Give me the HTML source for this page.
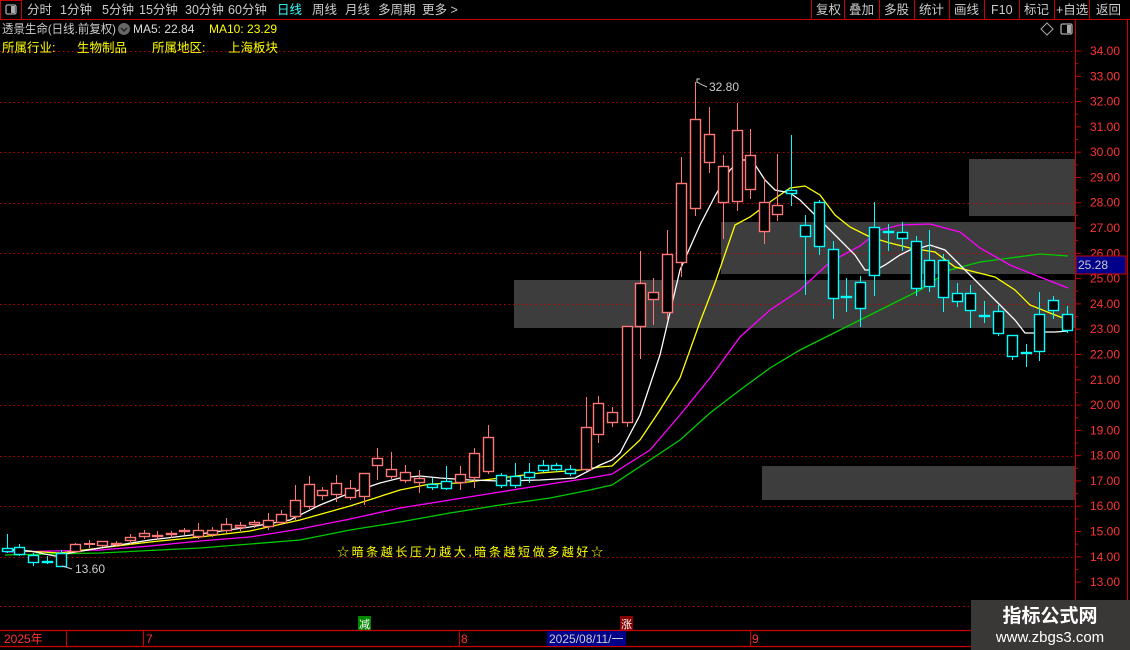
<!DOCTYPE html>
<html><head><meta charset="utf-8">
<style>
body{margin:0;background:#000;width:1130px;height:650px;overflow:hidden;font-family:"Liberation Sans","Noto Sans CJK SC",sans-serif;}
svg{position:absolute;left:0;top:0}
text{font-family:"Liberation Sans","Noto Sans CJK SC",sans-serif;}
</style></head><body>
<svg id="s" width="1130" height="650" viewBox="0 0 1130 650" xmlns="http://www.w3.org/2000/svg">
<rect width="1130" height="650" fill="#000"/>
<g id="bg"></g>
<g id="grid"></g>
<g id="ma" fill="none" stroke-width="1.3"></g>
<g id="k"></g>
<g id="ax"></g>
<rect x="0.5" y="0.5" width="21" height="19" fill="none" stroke="#c00" />
<rect x="6" y="5" width="10" height="9" rx="1.5" fill="none" stroke="#aaa" stroke-width="1.3"/>
<rect x="11" y="6" width="4" height="7" fill="#aaa"/>
<line x1="0" y1="19.5" x2="1130" y2="19.5" stroke="#c00"/>
<g font-size="12.5" fill="#ccc">
<text x="27" y="14">分时</text><text x="60" y="14">1分钟</text><text x="102" y="14">5分钟</text><text x="139" y="14">15分钟</text><text x="185" y="14">30分钟</text><text x="228" y="14">60分钟</text>
<text x="277" y="14" fill="#3ff">日线</text><text x="312" y="14">周线</text><text x="345" y="14">月线</text><text x="378" y="14">多周期</text><text x="422" y="14">更多 &gt;</text>
<text x="816" y="14">复权</text><text x="849" y="14">叠加</text><text x="884" y="14">多股</text><text x="919" y="14">统计</text><text x="954" y="14">画线</text><text x="991" y="14">F10</text><text x="1024" y="14">标记</text><text x="1056" y="14">+自选</text><text x="1096" y="14">返回</text>
</g>
<g stroke="#c00"><line x1="811.5" y1="0" x2="811.5" y2="19"/><line x1="844.5" y1="0" x2="844.5" y2="19"/><line x1="879.5" y1="0" x2="879.5" y2="19"/><line x1="914.5" y1="0" x2="914.5" y2="19"/><line x1="949.5" y1="0" x2="949.5" y2="19"/><line x1="984.5" y1="0" x2="984.5" y2="19"/><line x1="1019.5" y1="0" x2="1019.5" y2="19"/><line x1="1054.5" y1="0" x2="1054.5" y2="19"/><line x1="1089.5" y1="0" x2="1089.5" y2="19"/></g>
<g font-size="12">
<text x="2" y="33" fill="#ccc" textLength="114" lengthAdjust="spacingAndGlyphs">透景生命(日线.前复权)</text>
<circle cx="124" cy="29" r="6" fill="#666"/><path d="M121 28 L124 31 L127 28" stroke="#222" stroke-width="1.5" fill="none"/>
<text x="133" y="33" fill="#ddd">MA5: 22.84</text>
<text x="209" y="33" fill="#ff0">MA10: 23.29</text>
</g>
<g font-size="12.5">
<text x="2" y="52" fill="#ff0">所属行业:</text><text x="77" y="52" fill="#ff0">生物制品</text><text x="152" y="52" fill="#ff0">所属地区:</text><text x="228" y="52" fill="#ff0">上海板块</text>
</g>
<path d="M1041 29 L1047 23 L1053 29 L1047 35 Z" fill="none" stroke="#aaa"/>
<rect x="1061" y="24" width="11" height="10" rx="1.5" fill="none" stroke="#aaa" stroke-width="1.3"/><rect x="1067" y="25" width="4" height="8" fill="#aaa"/>
<path d="M697 83 L697 79 L700 79 M697 82 Q702 85 707 87" stroke="#ccc" fill="none"/>
<text x="709" y="91" font-size="12" fill="#ccc">32.80</text>
<path d="M62 566 L72 569" stroke="#ccc" fill="none"/>
<text x="75" y="573" font-size="12" fill="#ccc">13.60</text>
<text x="337" y="556" font-size="12" fill="#ff0" textLength="266" lengthAdjust="spacing">☆暗条越长压力越大,暗条越短做多越好☆</text>
<line x1="0" y1="606.5" x2="970" y2="606.5" stroke="#c00" stroke-dasharray="1.5,3"/>
<rect x="358" y="616" width="13" height="14" fill="#080"/><text x="359" y="628" font-size="11" fill="#fff">减</text>
<rect x="620" y="616" width="13" height="14" fill="#800"/><text x="621" y="628" font-size="11" fill="#fff">涨</text>
<line x1="0" y1="630.5" x2="1130" y2="630.5" stroke="#c00" stroke-width="1.3"/>
<line x1="0" y1="646.5" x2="1130" y2="646.5" stroke="#c00" stroke-width="1.3"/>
<g stroke="#c00"><line x1="66.5" y1="630" x2="66.5" y2="646"/><line x1="143.5" y1="630" x2="143.5" y2="646"/><line x1="459.5" y1="630" x2="459.5" y2="646"/><line x1="750.5" y1="630" x2="750.5" y2="646"/></g>
<g font-size="12" fill="#f33"><text x="4" y="643">2025年</text><text x="146" y="643">7</text><text x="461" y="643">8</text><text x="752" y="643">9</text></g>
<rect x="547" y="631" width="79" height="15" fill="#00008b"/>
<text x="549" y="643" font-size="12" fill="#ccc">2025/08/11/一</text>
<rect x="971" y="600" width="159" height="50" fill="#3a3837"/>
<text x="1050" y="622" font-size="19" font-weight="bold" fill="#fff" text-anchor="middle">指标公式网</text>
<text x="1050" y="642" font-size="15" fill="#fff" text-anchor="middle">www.zbgs3.com</text>
</svg>
<script>
var NS="http://www.w3.org/2000/svg";
function el(p,t,a){var e=document.createElementNS(NS,t);for(var k in a)e.setAttribute(k,a[k]);document.getElementById(p).appendChild(e);return e;}
function Y(p){return 51+(34-p)*25.29;}
[34,32,30,28,26,24,22,20,18,16,14].forEach(function(p){var y=Math.round(Y(p))+0.5;el("grid","line",{x1:0,y1:y,x2:1075,y2:y,stroke:"#b00","stroke-dasharray":"1.5,3"});});
[[969,159,106,57],[721,222,354,52],[514,280,561,48],[762,466,313,34]].forEach(function(r){el("bg","rect",{x:r[0],y:r[1],width:r[2],height:r[3],fill:"#3d3d3d"});});
el("ax","line",{x1:1075.5,y1:20,x2:1075.5,y2:600,stroke:"#c00"});
el("ax","line",{x1:1127.5,y1:20,x2:1127.5,y2:600,stroke:"#c00"});
for(var p=13;p<=34;p++){var y=Y(p);el("ax","line",{x1:1075,y1:y,x2:1081,y2:y,stroke:"#c00"});
var t=el("ax","text",{x:1120,y:y+4,"font-size":"12",fill:"#f33","text-anchor":"end"});t.textContent=p.toFixed(2);}
for(var p=13.5;p<34;p++){var y=Y(p);el("ax","line",{x1:1075,y1:y,x2:1078,y2:y,stroke:"#c00"});}
el("ax","rect",{x:1076,y:256,width:50,height:18,fill:"#00008b",stroke:"#c00"});
var t=el("ax","text",{x:1078,y:269,"font-size":"12",fill:"#ccc"});t.textContent="25.28";
function pl(c,pts){el("ma","polyline",{stroke:c,points:pts.map(function(a){return a.join(",")}).join(" ")});}
pl("#0c0",[[5,555],[100,553],[200,548],[300,540],[350,530],[400,522],[450,513],[500,505],[550,498],[590,490],[612,485],[650,460],[680,440],[710,413],[740,390],[770,368],[800,350],[830,335],[860,320],[890,305],[920,290],[950,270],[980,262],[1010,258],[1040,254],[1068,256]]);
pl("#f0f",[[5,552],[100,550],[150,546],[200,541],[250,537],[300,529],[350,519],[400,508],[450,500],[500,492],[550,484],[590,478],[612,474],[650,450],[680,415],[710,378],[740,337],[770,310],[800,290],[830,262],[860,246],[880,230],[900,225],[930,224],[960,232],[980,248],[1010,265],[1040,277],[1068,288]]);
pl("#ff0",[[5,550],[60,553],[100,548],[150,542],[200,537],[250,531],[300,520],[350,506],[400,490],[430,484],[460,483],[500,478],[540,473],[580,470],[600,467],[612,466],[640,440],[660,410],[680,378],[700,322],[715,283],[735,225],[750,217],[770,202],[790,188],[805,186],[820,195],[835,215],[850,227],[870,237],[890,243],[910,248],[935,252],[955,267],[975,272],[995,277],[1015,290],[1030,305],[1050,313],[1068,320]]);
pl("#fff",[[5,549],[30,551],[55,556],[70,553],[100,548],[150,540],[200,534],[250,527],[290,520],[320,505],[350,493],[380,483],[400,478],[420,476],[440,478],[470,480],[500,481],[540,480],[575,478],[600,465],[612,460],[620,453],[640,415],[660,355],[680,270],[700,225],[715,196],[730,170],[740,160],[752,160],[765,180],[775,190],[790,193],[800,200],[812,212],[830,230],[855,255],[865,270],[876,270],[885,265],[900,255],[910,250],[920,248],[930,245],[945,250],[960,265],[975,280],[990,295],[1000,305],[1015,320],[1025,333],[1035,333],[1045,332],[1055,332],[1068,331]]);
var R="#f77",C="#0ff";
var K=[[7,534,548,552,553,C],[19,544,547,555,556,C],[33,553,555,563,566,C],[47,556,561,563,564,C],[61,550,553,567,567,C],
[75,543,544,552,553,R],[89,540,543,544,548,R],[102,541,541,546,547,R],[116,541,543,545,546,R],[130,534,537,541,545,R],[144,530,533,537,539,R],[157,531,535,537,540,R],[171,531,533,535,538,R],[184,528,530,532,535,R],
[198,523,530,537,539,R],[212,527,530,535,537,R],[226,518,524,531,533,R],[240,522,525,528,531,R],[254,520,522,525,528,R],[268,513,520,527,530,R],[281,510,514,523,525,R],[295,485,500,517,520,R],[309,476,484,507,509,R],[322,487,490,496,500,R],[336,475,483,495,502,R],[350,480,488,498,500,R],[364,473,473,497,505,R],[377,448,458,466,480,R],[391,452,469,477,479,R],[405,465,472,481,483,R],[419,470,478,483,493,R],
[432,478,484,488,490,C],[446,466,481,489,490,C],[460,466,474,483,490,R],[474,448,453,478,488,R],[488,425,437,472,474,R],[501,473,475,486,488,C],[515,463,476,486,488,C],[529,463,472,478,483,C],[543,460,465,471,472,C],[556,463,465,470,472,C],[570,465,469,474,476,C],
[586,397,427,470,471,R],[598,396,403,435,443,R],[612,407,412,423,427,R],[627,326,326,423,427,R],[640,251,283,327,359,R],[653,278,292,300,325,R],[667,230,254,313,320,R],[681,157,183,263,277,R],[695,82,119,209,216,R],[709,107,134,163,173,R],[723,155,166,203,239,R],[737,103,130,202,211,R],[750,129,155,190,199,R],[764,178,202,232,244,R],[777,154,205,215,221,R],
[791,135,190,194,206,C],[805,215,225,237,295,C],[819,200,202,247,255,C],[833,241,249,299,319,C],[846,278,296,298,312,C],[860,276,282,309,327,C],[874,202,227,276,296,C],[888,224,231,233,251,C],[902,222,232,239,251,C],[916,236,241,289,296,C],[929,230,260,287,292,C],[943,254,260,298,312,C],[957,283,293,302,307,C],[970,285,293,311,328,C],[984,301,315,317,323,C],[998,305,311,334,336,C],[1012,335,335,357,360,C],[1026,344,352,354,367,C],[1039,292,314,352,361,C],[1053,296,300,311,319,C],[1067,306,314,331,333,C]];
K.forEach(function(c){var x=c[0],w=10;
el("k","line",{x1:x+0.5,y1:c[1],x2:x+0.5,y2:c[2],stroke:c[5]});
el("k","line",{x1:x+0.5,y1:c[3],x2:x+0.5,y2:c[4],stroke:c[5]});
var h=c[3]-c[2];
if(h<2){el("k","rect",{x:x-5,y:c[2],width:11,height:2,fill:c[5]});}
else el("k","rect",{x:x-4.5,y:c[2]+0.5,width:w,height:h-1,fill:"#000",stroke:c[5],"stroke-width":"1.4"});});
</script>
</body></html>
